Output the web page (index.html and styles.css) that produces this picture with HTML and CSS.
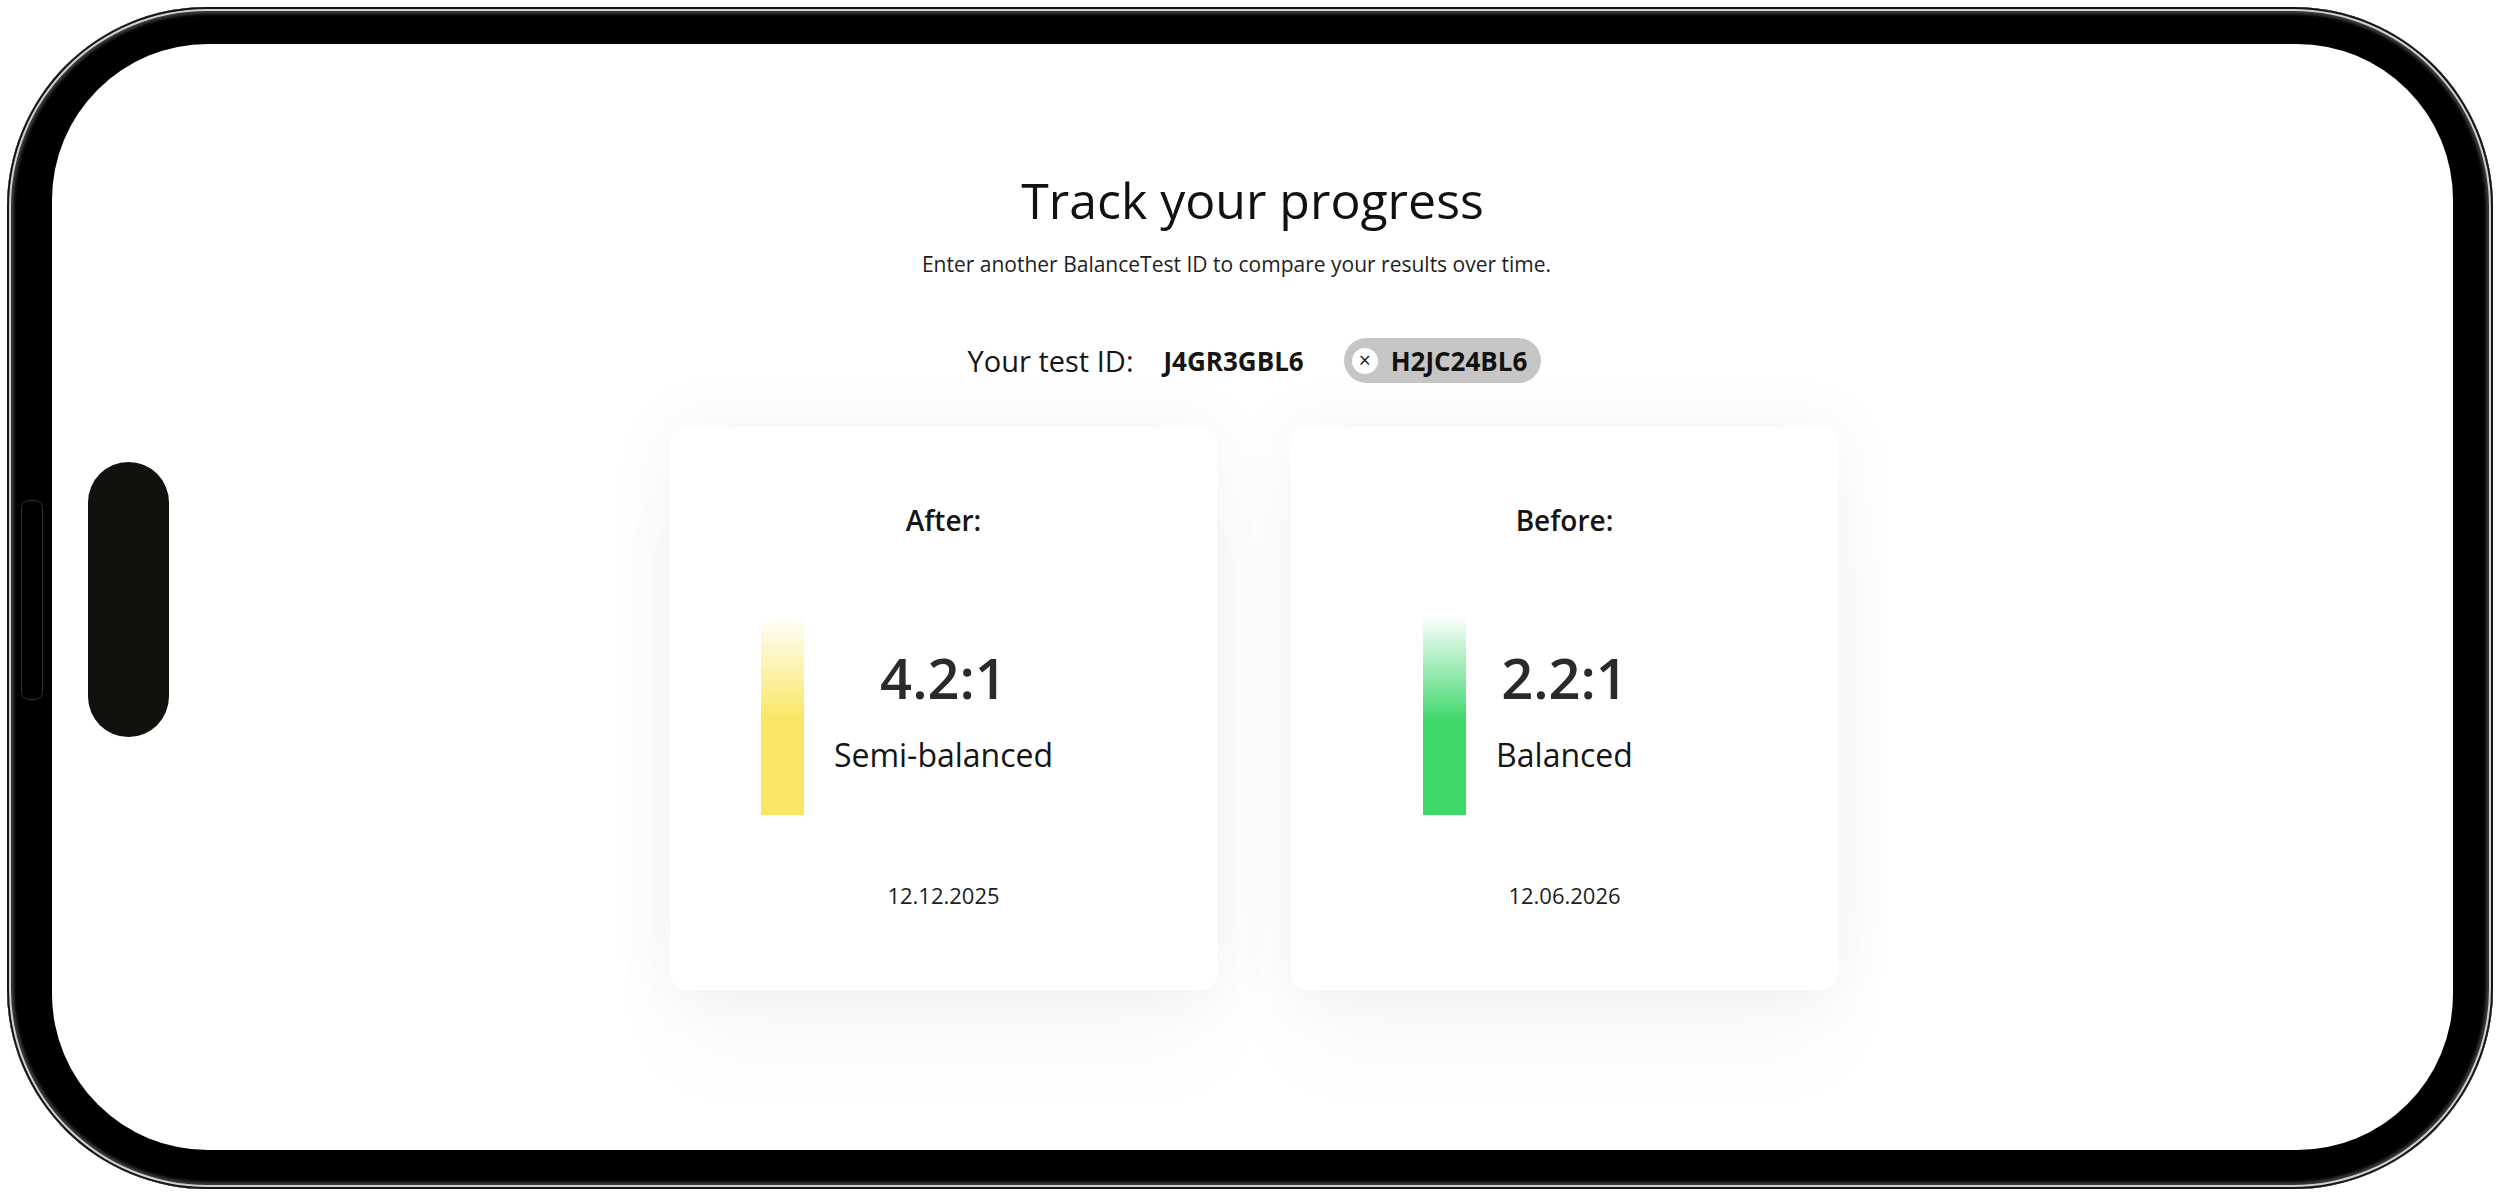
FILE: index.html
```html
<!DOCTYPE html>
<html lang="en">
  <head>
    <meta charset="UTF-8" />
    <meta name="viewport" content="width=device-width, initial-scale=1.0" />
    <title>Track your progress</title>
    <link rel="stylesheet" href="styles.css">
  </head>
  <body>
    <div class="phone">
      <span class="side-button"></span>
      <span class="island"></span>

      <div class="screen">
        <h1 class="title">Track your progress</h1>
        <p class="subtitle">Enter another BalanceTest ID to compare your results over time.</p>

        <div class="id-row">
          <span class="id-label">Your test ID:</span>
          <span class="id-value">J4GR3GBL6</span>
          <span class="id-chip">
            <span class="chip-close">&times;</span>
            H2JC24BL6
          </span>
        </div>

        <div class="cards">
          <div class="card">
            <div class="card-title">After:</div>
            <div class="card-result">
              <div class="bar bar-yellow"></div>
              <div class="result-text">
                <div class="ratio">4.2:1</div>
                <div class="status">Semi-balanced</div>
              </div>
              <div></div>
            </div>
            <div class="card-date">12.12.2025</div>
          </div>

          <div class="card">
            <div class="card-title">Before:</div>
            <div class="card-result">
              <div class="bar bar-green"></div>
              <div class="result-text">
                <div class="ratio">2.2:1</div>
                <div class="status">Balanced</div>
              </div>
              <div></div>
            </div>
            <div class="card-date">12.06.2026</div>
          </div>
        </div>
      </div>
    </div>
  </body>
</html>
```

FILE: styles.css
```css
/* Reset default margin and padding */
body,
h1,
p {
  margin: 0;
  padding: 0;
}

body {
  font-family: "Open Sans", "Noto Sans", Arial, sans-serif;
  background-color: #ffffff;
  color: #111111;
  overflow: hidden;
}

/* Phone frame */
.phone {
  position: relative;
  box-sizing: border-box;
  width: 2486px;
  height: 1182px;
  margin: 7px;
  padding: 37px 40px 39px 45px;
  background-color: #000000;
  border-radius: 200px;
  box-shadow: inset 0 0 0 2px #151515, inset 0 0 0 4px #cfcfcf,
    inset 0 0 3px 7px #3a3a3a;
}

.side-button {
  position: absolute;
  left: 14px;
  top: 493px;
  width: 20px;
  height: 198px;
  border: 1px solid #2e2e2e;
  border-radius: 8px;
}

.island {
  position: absolute;
  left: 81px;
  top: 455px;
  width: 81px;
  height: 275px;
  background-color: #11110d;
  border-radius: 41px;
  z-index: 2;
}

.screen {
  height: 100%;
  display: flex;
  flex-direction: column;
  align-items: center;
  padding-top: 131px;
  box-sizing: border-box;
  background-color: #ffffff;
  border-radius: 156px;
}

/* Header */
.title {
  font-size: 50px;
  font-weight: 400;
  line-height: 1;
  color: #111111;
}

.subtitle {
  margin-top: 29px;
  margin-right: 32px;
  font-size: 21px;
  line-height: 1;
  color: #1e1e1e;
}

.id-row {
  display: flex;
  align-items: center;
  margin-top: 63px;
  margin-left: 4px;
  height: 45px;
}

.id-label {
  font-size: 29px;
  line-height: 1;
  color: #151515;
}

.id-value {
  margin-left: 30px;
  font-size: 26px;
  font-weight: 700;
  line-height: 1;
  color: #151515;
}

.id-chip {
  display: flex;
  align-items: center;
  gap: 13px;
  height: 45px;
  margin-left: 40px;
  padding: 0 14px 0 8px;
  background-color: #c6c6c6;
  border-radius: 23px;
  font-size: 26px;
  font-weight: 700;
  color: #111111;
}

.chip-close {
  display: flex;
  align-items: center;
  justify-content: center;
  width: 26px;
  height: 26px;
  background-color: #ffffff;
  border-radius: 50%;
  font-size: 21px;
  font-weight: 400;
  line-height: 1;
  color: #222222;
}

/* Result cards */
.cards {
  display: flex;
  gap: 74px;
  margin-top: 44px;
  margin-left: 3px;
}

.card {
  width: 547px;
  height: 563px;
  box-sizing: border-box;
  padding: 79px 0 84px;
  display: flex;
  flex-direction: column;
  background-color: #ffffff;
  border-radius: 16px;
  box-shadow: 0 0 70px rgba(0, 0, 0, 0.05), 0 70px 90px rgba(0, 0, 0, 0.025);
}

.card-title {
  text-align: center;
  font-size: 28px;
  font-weight: 600;
  line-height: 1;
  color: #151515;
}

.card-result {
  display: grid;
  grid-template-columns: 1fr auto 1fr;
  align-items: center;
  margin-top: 81px;
}

.bar {
  justify-self: end;
  width: 43px;
  height: 200px;
  margin-right: 30px;
}

.bar-yellow {
  background: linear-gradient(to bottom, rgba(250, 230, 95, 0) 0%, #fae662 53%, #fae662 100%);
}

.bar-green {
  background: linear-gradient(to bottom, rgba(63, 216, 107, 0) 0%, #3fd86b 53%, #3fd86b 100%);
}

.result-text {
  text-align: center;
  margin-bottom: 10px;
}

.ratio {
  font-size: 56px;
  font-weight: 600;
  line-height: 1;
  color: #2a2a2a;
}

.status {
  margin-top: 34px;
  font-size: 32px;
  line-height: 1;
  color: #151515;
}

.card-date {
  margin-top: 69px;
  text-align: center;
  font-size: 22px;
  line-height: 1;
  color: #1e1e1e;
}
```
